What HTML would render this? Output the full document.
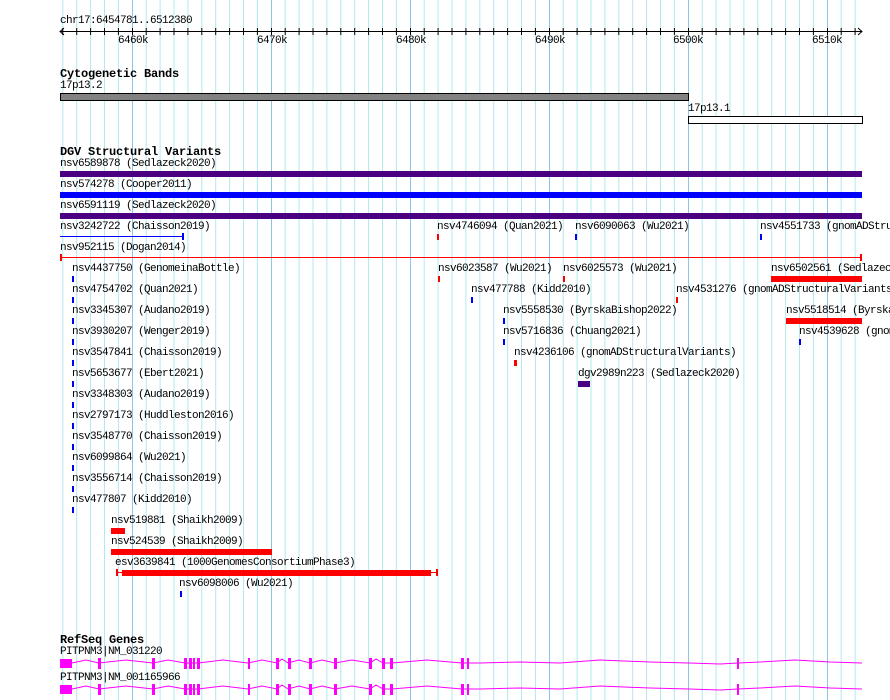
<!DOCTYPE html>
<html><head><meta charset="utf-8"><style>
body{margin:0;width:890px;height:700px;background:#fff;position:relative;overflow:hidden;font-family:"Liberation Mono",monospace;font-size:11px;letter-spacing:-0.6px;color:#000}
.t{position:absolute;line-height:12px;white-space:pre}
.b{position:absolute}
.h{font-weight:bold;font-size:12px;letter-spacing:-0.2px}
</style></head><body>
<svg class="b" style="left:0;top:0" width="890" height="700">
<g stroke="#b2e8ee">
<line x1="62.8" y1="0" x2="62.8" y2="700"/><line x1="76.7" y1="0" x2="76.7" y2="700"/><line x1="90.6" y1="0" x2="90.6" y2="700"/><line x1="104.5" y1="0" x2="104.5" y2="700"/><line x1="118.4" y1="0" x2="118.4" y2="700"/>
<line x1="146.2" y1="0" x2="146.2" y2="700"/><line x1="160.1" y1="0" x2="160.1" y2="700"/><line x1="174" y1="0" x2="174" y2="700"/><line x1="187.9" y1="0" x2="187.9" y2="700"/><line x1="201.8" y1="0" x2="201.8" y2="700"/><line x1="215.7" y1="0" x2="215.7" y2="700"/><line x1="229.6" y1="0" x2="229.6" y2="700"/><line x1="243.5" y1="0" x2="243.5" y2="700"/><line x1="257.4" y1="0" x2="257.4" y2="700"/>
<line x1="285.2" y1="0" x2="285.2" y2="700"/><line x1="299.1" y1="0" x2="299.1" y2="700"/><line x1="313" y1="0" x2="313" y2="700"/><line x1="326.9" y1="0" x2="326.9" y2="700"/><line x1="340.8" y1="0" x2="340.8" y2="700"/><line x1="354.7" y1="0" x2="354.7" y2="700"/><line x1="368.6" y1="0" x2="368.6" y2="700"/><line x1="382.5" y1="0" x2="382.5" y2="700"/><line x1="396.4" y1="0" x2="396.4" y2="700"/>
<line x1="424.2" y1="0" x2="424.2" y2="700"/><line x1="438.1" y1="0" x2="438.1" y2="700"/><line x1="452" y1="0" x2="452" y2="700"/><line x1="465.9" y1="0" x2="465.9" y2="700"/><line x1="479.8" y1="0" x2="479.8" y2="700"/><line x1="493.7" y1="0" x2="493.7" y2="700"/><line x1="507.6" y1="0" x2="507.6" y2="700"/><line x1="521.5" y1="0" x2="521.5" y2="700"/><line x1="535.4" y1="0" x2="535.4" y2="700"/>
<line x1="563.2" y1="0" x2="563.2" y2="700"/><line x1="577.1" y1="0" x2="577.1" y2="700"/><line x1="591" y1="0" x2="591" y2="700"/><line x1="604.9" y1="0" x2="604.9" y2="700"/><line x1="618.8" y1="0" x2="618.8" y2="700"/><line x1="632.7" y1="0" x2="632.7" y2="700"/><line x1="646.6" y1="0" x2="646.6" y2="700"/><line x1="660.5" y1="0" x2="660.5" y2="700"/><line x1="674.4" y1="0" x2="674.4" y2="700"/>
<line x1="702.2" y1="0" x2="702.2" y2="700"/><line x1="716.1" y1="0" x2="716.1" y2="700"/><line x1="730" y1="0" x2="730" y2="700"/><line x1="743.9" y1="0" x2="743.9" y2="700"/><line x1="757.8" y1="0" x2="757.8" y2="700"/><line x1="771.7" y1="0" x2="771.7" y2="700"/><line x1="785.6" y1="0" x2="785.6" y2="700"/><line x1="799.5" y1="0" x2="799.5" y2="700"/><line x1="813.4" y1="0" x2="813.4" y2="700"/>
<line x1="841.2" y1="0" x2="841.2" y2="700"/><line x1="855.1" y1="0" x2="855.1" y2="700"/>
</g>
<g stroke="#8cc4ea">
<line x1="132.5" y1="0" x2="132.5" y2="700"/><line x1="271.5" y1="0" x2="271.5" y2="700"/><line x1="410.5" y1="0" x2="410.5" y2="700"/><line x1="549.5" y1="0" x2="549.5" y2="700"/><line x1="688.5" y1="0" x2="688.5" y2="700"/><line x1="827.5" y1="0" x2="827.5" y2="700"/>
</g>
<g stroke="#000" fill="none">
<line x1="60" y1="31.5" x2="862" y2="31.5"/>
<polyline points="64,28 60,31.5 64,35"/><polyline points="858,28 862,31.5 858,35"/>
<path d="M62.8 28v7M76.7 28v7M90.6 28v7M104.5 28v7M118.4 28v7M132.5 28v7M146.2 28v7M160.1 28v7M174 28v7M187.9 28v7M201.8 28v7M215.7 28v7M229.6 28v7M243.5 28v7M257.4 28v7M271.5 28v7M285.2 28v7M299.1 28v7M313 28v7M326.9 28v7M340.8 28v7M354.7 28v7M368.6 28v7M382.5 28v7M396.4 28v7M410.5 28v7M424.2 28v7M438.1 28v7M452 28v7M465.9 28v7M479.8 28v7M493.7 28v7M507.6 28v7M521.5 28v7M535.4 28v7M549.5 28v7M563.2 28v7M577.1 28v7M591 28v7M604.9 28v7M618.8 28v7M632.7 28v7M646.6 28v7M660.5 28v7M674.4 28v7M688.5 28v7M702.2 28v7M716.1 28v7M730 28v7M743.9 28v7M757.8 28v7M771.7 28v7M785.6 28v7M799.5 28v7M813.4 28v7M827.5 28v7M841.2 28v7M855.1 28v7"/>
</g>
<rect x="60.5" y="93.5" width="628" height="7" fill="#828282" stroke="#000"/>
<rect x="688.5" y="116.5" width="174" height="7" fill="#fff" stroke="#000"/>
<rect x="60" y="171" width="802" height="6" fill="#4b0082"/>
<rect x="60" y="192" width="802" height="6" fill="#0000ff"/>
<rect x="60" y="213" width="802" height="6" fill="#4b0082"/>
<line x1="60" y1="236.5" x2="183" y2="236.5" stroke="#0000ff"/><rect x="182" y="233" width="2" height="7" fill="#0000ff"/>
<rect x="437" y="234" width="2" height="6" fill="#f00"/>
<rect x="575" y="234" width="2" height="6" fill="#00f"/>
<rect x="760" y="234" width="2" height="6" fill="#00f"/>
<line x1="60" y1="257.5" x2="862" y2="257.5" stroke="#f00"/><rect x="60" y="254" width="2" height="7" fill="#f00"/><rect x="860" y="254" width="2" height="7" fill="#f00"/>
<rect x="72" y="276" width="2" height="6" fill="#00f"/><rect x="438" y="276" width="2" height="6" fill="#f00"/><rect x="563" y="276" width="2" height="6" fill="#f00"/><rect x="771" y="276" width="91" height="6" fill="#f00"/>
<rect x="72" y="297" width="2" height="6" fill="#00f"/><rect x="471" y="297" width="2" height="6" fill="#00f"/><rect x="676" y="297" width="2" height="6" fill="#f00"/>
<rect x="72" y="318" width="2" height="6" fill="#00f"/><rect x="503" y="318" width="2" height="6" fill="#00f"/><rect x="786" y="318" width="76" height="6" fill="#f00"/>
<rect x="72" y="339" width="2" height="6" fill="#00f"/><rect x="503" y="339" width="2" height="6" fill="#00f"/><rect x="799" y="339" width="2" height="6" fill="#00f"/>
<rect x="72" y="360" width="2" height="6" fill="#00f"/><rect x="514" y="360" width="3" height="6" fill="#f00"/>
<rect x="72" y="381" width="2" height="6" fill="#00f"/><rect x="578" y="381" width="12" height="6" fill="#4b0082"/>
<rect x="72" y="402" width="2" height="6" fill="#00f"/>
<rect x="72" y="423" width="2" height="6" fill="#00f"/>
<rect x="72" y="444" width="2" height="6" fill="#00f"/>
<rect x="72" y="465" width="2" height="6" fill="#00f"/>
<rect x="72" y="486" width="2" height="6" fill="#00f"/>
<rect x="72" y="507" width="2" height="6" fill="#00f"/>
<rect x="111" y="528" width="14" height="6" fill="#f00"/>
<rect x="111" y="549" width="161" height="6" fill="#f00"/>
<line x1="116" y1="572.5" x2="438" y2="572.5" stroke="#f00"/><rect x="116" y="569" width="2" height="7" fill="#f00"/><rect x="436" y="569" width="2" height="7" fill="#f00"/><rect x="122" y="570" width="309" height="6" fill="#f00"/>
<rect x="180" y="591" width="2" height="6" fill="#00f"/>
<g id="gene">
<polyline fill="none" stroke="#f0f" points="72,663 86,660 99,663 126,660 153,663 168,660 185,663 198,663 223,660 248,663 262,660 277,663 282,659 288,663 299,660 310,663 322,660 335,663 352,660 370,663 376,659 383,663 392,663 427,660 462,663 468,663 480,663 520,662 560,663 600,660 650,662 689,663 720,664 738,663 760,662 795,660 830,662 862,663"/>
<rect x="60" y="659" width="12" height="9" fill="#f0f"/>
<g fill="#f0f"><rect x="98" y="658" width="3" height="11"/><rect x="152" y="658" width="3" height="11"/><rect x="184" y="658" width="3" height="11"/><rect x="189" y="658" width="3" height="11"/><rect x="193" y="658" width="2" height="11"/><rect x="197" y="658" width="3" height="11"/><rect x="248" y="658" width="2" height="11"/><rect x="276" y="658" width="3" height="11"/><rect x="288" y="658" width="3" height="11"/><rect x="309" y="658" width="3" height="11"/><rect x="334" y="658" width="3" height="11"/><rect x="369" y="658" width="3" height="11"/><rect x="382" y="658" width="3" height="11"/><rect x="390" y="658" width="3" height="11"/><rect x="461" y="658" width="3" height="11"/><rect x="467" y="658" width="2" height="11"/><rect x="737" y="658" width="2" height="11"/></g>
</g>
<use href="#gene" y="26"/>
</svg>
<div class="t" style="left:60px;top:15px">chr17:6454781..6512380</div>
<div class="t" style="left:118px;top:35px">6460k</div>
<div class="t" style="left:257px;top:35px">6470k</div>
<div class="t" style="left:396px;top:35px">6480k</div>
<div class="t" style="left:535px;top:35px">6490k</div>
<div class="t" style="left:673px;top:35px">6500k</div>
<div class="t" style="left:812px;top:35px">6510k</div>
<div class="t h" style="left:60px;top:68px">Cytogenetic Bands</div>
<div class="t" style="left:60px;top:80px">17p13.2</div>
<div class="t" style="left:688px;top:103px">17p13.1</div>
<div class="t h" style="left:60px;top:146px">DGV Structural Variants</div>
<div class="t" style="left:60px;top:158px">nsv6589878 (Sedlazeck2020)</div>
<div class="t" style="left:60px;top:179px">nsv574278 (Cooper2011)</div>
<div class="t" style="left:60px;top:200px">nsv6591119 (Sedlazeck2020)</div>
<div class="t" style="left:60px;top:221px">nsv3242722 (Chaisson2019)</div>
<div class="t" style="left:437px;top:221px">nsv4746094 (Quan2021)</div>
<div class="t" style="left:575px;top:221px">nsv6090063 (Wu2021)</div>
<div class="t" style="left:760px;top:221px">nsv4551733 (gnomADStru</div>
<div class="t" style="left:60px;top:242px">nsv952115 (Dogan2014)</div>
<div class="t" style="left:72px;top:263px">nsv4437750 (GenomeinaBottle)</div>
<div class="t" style="left:438px;top:263px">nsv6023587 (Wu2021)</div>
<div class="t" style="left:563px;top:263px">nsv6025573 (Wu2021)</div>
<div class="t" style="left:771px;top:263px">nsv6502561 (Sedlazec</div>
<div class="t" style="left:72px;top:284px">nsv4754702 (Quan2021)</div>
<div class="t" style="left:471px;top:284px">nsv477788 (Kidd2010)</div>
<div class="t" style="left:676px;top:284px">nsv4531276 (gnomADStructuralVariants</div>
<div class="t" style="left:72px;top:305px">nsv3345307 (Audano2019)</div>
<div class="t" style="left:503px;top:305px">nsv5558530 (ByrskaBishop2022)</div>
<div class="t" style="left:786px;top:305px">nsv5518514 (Byrska</div>
<div class="t" style="left:72px;top:326px">nsv3930207 (Wenger2019)</div>
<div class="t" style="left:503px;top:326px">nsv5716836 (Chuang2021)</div>
<div class="t" style="left:799px;top:326px">nsv4539628 (gnom</div>
<div class="t" style="left:72px;top:347px">nsv3547841 (Chaisson2019)</div>
<div class="t" style="left:514px;top:347px">nsv4236106 (gnomADStructuralVariants)</div>
<div class="t" style="left:72px;top:368px">nsv5653677 (Ebert2021)</div>
<div class="t" style="left:578px;top:368px">dgv2989n223 (Sedlazeck2020)</div>
<div class="t" style="left:72px;top:389px">nsv3348303 (Audano2019)</div>
<div class="t" style="left:72px;top:410px">nsv2797173 (Huddleston2016)</div>
<div class="t" style="left:72px;top:431px">nsv3548770 (Chaisson2019)</div>
<div class="t" style="left:72px;top:452px">nsv6099864 (Wu2021)</div>
<div class="t" style="left:72px;top:473px">nsv3556714 (Chaisson2019)</div>
<div class="t" style="left:72px;top:494px">nsv477807 (Kidd2010)</div>
<div class="t" style="left:111px;top:515px">nsv519881 (Shaikh2009)</div>
<div class="t" style="left:111px;top:536px">nsv524539 (Shaikh2009)</div>
<div class="t" style="left:115px;top:557px">esv3639841 (1000GenomesConsortiumPhase3)</div>
<div class="t" style="left:179px;top:578px">nsv6098006 (Wu2021)</div>
<div class="t h" style="left:60px;top:634px">RefSeq Genes</div>
<div class="t" style="left:60px;top:646px">PITPNM3|NM_031220</div>
<div class="t" style="left:60px;top:672px">PITPNM3|NM_001165966</div>
</body></html>
